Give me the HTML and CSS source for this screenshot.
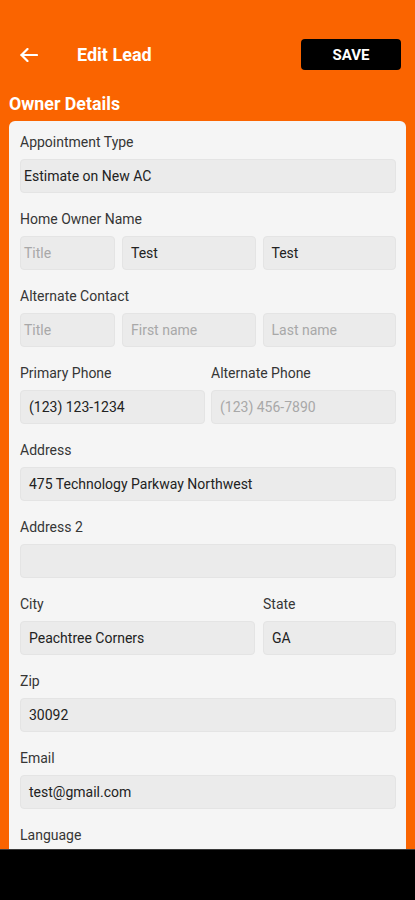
FILE: index.html
```html
<!DOCTYPE html>
<html lang="en">
<head>
    <meta charset="UTF-8">
    <meta name="viewport" content="width=device-width, initial-scale=1.0">
    <title>Edit Lead</title>
    <link rel="stylesheet" href="styles.css">
</head>
<body>
    <div class="app-container">
        <div class="top-bar">
            <button class="back-button" aria-label="Back">
                <svg width="18" height="14" viewBox="0 0 18 14" fill="none" stroke="currentColor" stroke-width="2.2" stroke-linecap="round" stroke-linejoin="round">
                    <line x1="17" y1="7" x2="1.5" y2="7"></line>
                    <polyline points="7.5 1 1.5 7 7.5 13"></polyline>
                </svg>
            </button>
            <div class="page-title">Edit Lead</div>
            <button class="save-button">SAVE</button>
        </div>

        <div class="content">
            <div class="section-title">Owner Details</div>

            <div class="form-card">
                <div class="field">
                    <div class="field-label">Appointment Type</div>
                    <div class="input-box picker">Estimate on New AC</div>
                </div>

                <div class="field">
                    <div class="field-label">Home Owner Name</div>
                    <div class="row row-name">
                        <div class="input-box picker placeholder">Title</div>
                        <div class="input-box">Test</div>
                        <div class="input-box">Test</div>
                    </div>
                </div>

                <div class="field">
                    <div class="field-label">Alternate Contact</div>
                    <div class="row row-name">
                        <div class="input-box picker placeholder">Title</div>
                        <div class="input-box placeholder">First name</div>
                        <div class="input-box placeholder">Last name</div>
                    </div>
                </div>

                <div class="row row-half">
                    <div class="field">
                        <div class="field-label">Primary Phone</div>
                        <div class="input-box">(123) 123-1234</div>
                    </div>
                    <div class="field">
                        <div class="field-label">Alternate Phone</div>
                        <div class="input-box placeholder">(123) 456-7890</div>
                    </div>
                </div>

                <div class="field">
                    <div class="field-label">Address</div>
                    <div class="input-box">475 Technology Parkway Northwest</div>
                </div>

                <div class="field">
                    <div class="field-label">Address 2</div>
                    <div class="input-box"></div>
                </div>

                <div class="row row-city">
                    <div class="field">
                        <div class="field-label">City</div>
                        <div class="input-box">Peachtree Corners</div>
                    </div>
                    <div class="field">
                        <div class="field-label">State</div>
                        <div class="input-box">GA</div>
                    </div>
                </div>

                <div class="field">
                    <div class="field-label">Zip</div>
                    <div class="input-box">30092</div>
                </div>

                <div class="field">
                    <div class="field-label">Email</div>
                    <div class="input-box">test@gmail.com</div>
                </div>

                <div class="field">
                    <div class="field-label">Language</div>
                    <div class="input-box picker"></div>
                </div>
            </div>
        </div>

        <div class="nav-bar"></div>
    </div>
</body>
</html>
```

FILE: styles.css
```css
* {
    margin: 0;
    padding: 0;
    box-sizing: border-box;
}

html, body {
    height: 100%;
    width: 100%;
    overflow: hidden;
    background-color: #fa6400;
    font-family: Roboto, 'Liberation Sans', sans-serif;
}

.app-container {
    display: flex;
    flex-direction: column;
    height: 100%;
    width: 100%;
}

.top-bar {
    display: flex;
    align-items: center;
    height: 31px;
    margin-top: 39px;
    padding: 0 14px 0 20px;
    color: #fff;
}

.back-button {
    background: none;
    border: none;
    color: #fff;
    display: flex;
    align-items: center;
    margin-right: 39px;
}

.page-title {
    flex: 1;
    font-size: 18px;
    font-weight: 700;
    line-height: 31px;
}

.save-button {
    width: 100px;
    height: 31px;
    background-color: #000;
    color: #fff;
    border: none;
    border-radius: 4px;
    font-family: inherit;
    font-size: 15px;
    font-weight: 700;
}

.content {
    flex: 1;
    overflow: hidden;
}

.section-title {
    margin: 24px 0 7px 9px;
    color: #fff;
    font-size: 17.8px;
    font-weight: 700;
    line-height: 20px;
}

.form-card {
    margin: 0 9px;
    padding: 13px 10px 20px 11px;
    background-color: #f5f5f5;
    border-radius: 6px;
    display: flex;
    flex-direction: column;
    gap: 18px;
}

.field {
    display: flex;
    flex-direction: column;
    min-width: 0;
}

.field-label {
    font-size: 14px;
    line-height: 17px;
    color: #363636;
    margin-bottom: 8px;
}

.input-box {
    height: 34px;
    line-height: 32px;
    padding: 0 8px;
    background-color: #ebebeb;
    border: 1px solid #e4e4e4;
    border-radius: 4px;
    font-size: 14px;
    color: #222;
    white-space: nowrap;
    overflow: hidden;
}

.input-box.picker {
    padding-left: 3px;
}

.input-box.placeholder {
    color: #a8a8a8;
}

.row {
    display: grid;
}

.row-name {
    grid-template-columns: 95px 1fr 1fr;
    gap: 7px;
}

.row-half {
    grid-template-columns: 1fr 1fr;
    gap: 6px;
}

.row-city {
    grid-template-columns: 235px 1fr;
    gap: 8px;
}

.nav-bar {
    height: 51px;
    background-color: #000;
    border-top: 1px solid #3a3a3a;
}
```
